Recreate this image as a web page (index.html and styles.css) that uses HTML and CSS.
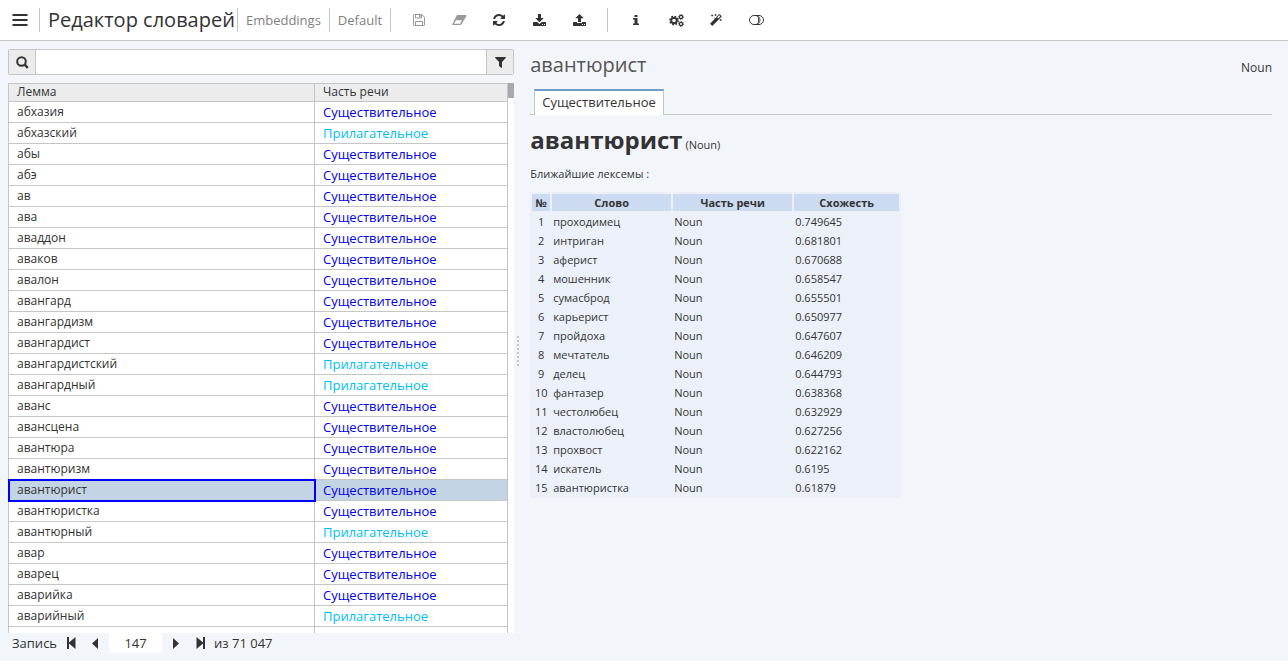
FILE: index.html
```html
<!DOCTYPE html>
<html lang="ru">
<head>
<meta charset="utf-8">
<meta name="viewport" content="width=device-width, initial-scale=1.0">
<title>Редактор словарей</title>
<link rel="stylesheet" href="styles.css">
</head>
<body>
  <header class="topbar">
    <button class="menu" aria-label="Меню">
      <svg width="16" height="14" viewBox="0 0 16 14"><path d="M.5 2h15M.5 7h15M.5 12h15" stroke="currentColor" stroke-width="2"/></svg>
    </button>
    <h1 class="title">Редактор словарей</h1>
    <a class="crumb" href="#">Embeddings</a>
    <a class="crumb" href="#">Default</a>
    <div class="tools">
      <button class="tool" aria-label="Сохранить" disabled>
        <svg width="12" height="12" viewBox="0 0 12 12" fill="none" stroke="currentColor"><path d="M.5 1.2Q.5.5 1.2.5h7.6l2.700 2.700v7.600q0 .7-.7.7H1.200Q.5 11.500.5 10.800z"/><path d="M2.500.5v3.500h6v-3.500M2.500 11.500v-4h7v4"/><path d="M6 1h1.500v2.500H6z" fill="currentColor" stroke="none"/></svg>
      </button>
      <button class="tool" aria-label="Очистить" disabled>
        <svg width="15" height="10" viewBox="0 0 15 10"><path d="M5.500 0h8q1.500 0 .8 1.300L9.500 9.300Q9 10 8.200 10H1.200Q-.2 10 .5 8.700L4.500.8Q4.800 0 5.500 0zM2 8.800h6l2-3.600H4z" fill="currentColor" fill-rule="evenodd"/></svg>
      </button>
      <button class="tool" aria-label="Обновить">
        <svg width="12" height="12" viewBox="0 0 1536 1536"><path fill="currentColor" d="M1511 928q0 5-1 7-64 268-268 434.500T764 1536q-146 0-282.500-55T238 1324l-129 129q-19 19-45 19t-45-19-19-45V960q0-26 19-45t45-19h448q26 0 45 19t19 45-19 45l-137 137q71 66 161 102t187 36q134 0 250-65t186-179q11-17 53-117 8-23 30-23h192q13 0 22.500 9.500t9.500 22.500zM1536 128v448q0 26-19 45t-45 19h-448q-26 0-45-19t-19-45 19-45l138-138Q969 256 768 256q-134 0-250 65T332 500q-11 17-53 117-8 23-30 23H50q-13 0-22.500-9.500T18 608v-7q65-268 270-434.500T768 0q146 0 284 55.500T1297 212l130-129q19-19 45-19t45 19 19 45z"/></svg>
      </button>
      <button class="tool" aria-label="Загрузить">
        <svg width="13" height="12" viewBox="0 0 13 12"><path fill="currentColor" fill-rule="evenodd" d="M5 0h3v4h2.800L6.500 8.300 2.200 4H5zM.7 8h3.500l2.300 2 2.300-2h3.500q.7 0 .7.700v2.600q0 .7-.7.700H.7q-.7 0-.7-.7V8.700Q0 8 .7 8zM9 10v1h1v-1zM11 10v1h1v-1z"/></svg>
      </button>
      <button class="tool" aria-label="Выгрузить">
        <svg width="13" height="12" viewBox="0 0 13 12"><path fill="currentColor" fill-rule="evenodd" d="M6.500 0l4.300 4.300H8V8H5V4.300H2.200zM.7 8H4v1h5V8h3.300q.7 0 .7.700v2.600q0 .7-.7.700H.7q-.7 0-.7-.7V8.700Q0 8 .7 8zM9 10v1h1v-1zM11 10v1h1v-1z"/></svg>
      </button>
    </div>
    <div class="tools">
      <button class="tool" aria-label="Информация">
        <svg width="6" height="10" viewBox="0 0 6 10"><path fill="currentColor" d="M1.500 0h3v2h-3zM0 3h4.500v5.500H6V10H0V8.500h1.500v-4H0z"/></svg>
      </button>
      <button class="tool" aria-label="Настройки">
        <svg width="15" height="13" viewBox="0 0 15 13" fill="none" stroke="currentColor"><circle cx="5" cy="6.500" r="2.800" stroke-width="2"/><circle cx="5" cy="6.500" r="4.200" stroke-width="1.400" stroke-dasharray="1.700 1.600"/><circle cx="12" cy="3" r="1.600" stroke-width="1.200"/><circle cx="12" cy="3" r="2.500" stroke-width=".9" stroke-dasharray="1 .96"/><circle cx="12" cy="10" r="1.600" stroke-width="1.200"/><circle cx="12" cy="10" r="2.500" stroke-width=".9" stroke-dasharray="1 .96"/></svg>
      </button>
      <button class="tool" aria-label="Обработка">
        <svg width="12" height="12" viewBox="0 0 12 12"><path fill="currentColor" fill-rule="evenodd" d="M9.700.3l1.800 1.800q.4.300 0 .7L2.600 11.700q-.3.300-.6 0L.3 10q-.4-.3 0-.6L9.100.3q.3-.3.600 0zM9.300 1.300L7.200 3.400l1 1 2.100-2.100z"/><path d="M2.200.5v2M1.200 1.500h2M5.500 0v2M4.500 1h2M10.700 5v2M9.700 6h2M4.200 3.500v1" stroke="currentColor" stroke-width=".8"/></svg>
      </button>
      <button class="tool" aria-label="Переключить">
        <svg width="15" height="10" viewBox="0 0 15 10" fill="none" stroke="currentColor"><rect x=".5" y=".5" width="14" height="9" rx="4.500"/><path d="M5.500.5h1a4.500 4.500 0 0 1 0 9M8 .5a4.500 4.500 0 0 1 1.500 4.500 4.500 4.500 0 0 1-1.500 4.500" stroke-width=".9"/></svg>
      </button>
    </div>
  </header>

  <main class="main">
    <section class="list">
      <form class="search">
        <button class="search-btn" type="button" aria-label="Найти">
          <svg width="13" height="13" viewBox="0 0 13 13" fill="none" stroke="currentColor" stroke-width="2"><circle cx="5.500" cy="5.500" r="4.300"/><path d="M8.600 8.600l3.200 3.200" stroke-width="2.400"/></svg>
        </button>
        <input class="search-input" type="text" aria-label="Поиск">
        <button class="search-btn" type="button" aria-label="Фильтр">
          <svg width="11" height="11" viewBox="0 0 11 11"><path fill="currentColor" d="M.5 0h10q.7.400.2 1L7 5v5.500q-.2.700-.8.300L4 9V5L.3 1Q-.2.400.5 0z"/></svg>
        </button>
      </form>

      <div class="grid">
        <table class="words">
          <thead>
            <tr><th class="col-lemma">Лемма</th><th>Часть речи</th></tr>
          </thead>
          <tbody>
            <tr><td>абхазия</td><td class="noun">Существительное</td></tr>
            <tr><td>абхазский</td><td class="adj">Прилагательное</td></tr>
            <tr><td>абы</td><td class="noun">Существительное</td></tr>
            <tr><td>абэ</td><td class="noun">Существительное</td></tr>
            <tr><td>ав</td><td class="noun">Существительное</td></tr>
            <tr><td>ава</td><td class="noun">Существительное</td></tr>
            <tr><td>аваддон</td><td class="noun">Существительное</td></tr>
            <tr><td>аваков</td><td class="noun">Существительное</td></tr>
            <tr><td>авалон</td><td class="noun">Существительное</td></tr>
            <tr><td>авангард</td><td class="noun">Существительное</td></tr>
            <tr><td>авангардизм</td><td class="noun">Существительное</td></tr>
            <tr><td>авангардист</td><td class="noun">Существительное</td></tr>
            <tr><td>авангардистский</td><td class="adj">Прилагательное</td></tr>
            <tr><td>авангардный</td><td class="adj">Прилагательное</td></tr>
            <tr><td>аванс</td><td class="noun">Существительное</td></tr>
            <tr><td>авансцена</td><td class="noun">Существительное</td></tr>
            <tr><td>авантюра</td><td class="noun">Существительное</td></tr>
            <tr><td>авантюризм</td><td class="noun">Существительное</td></tr>
            <tr class="selected"><td class="focused">авантюрист</td><td class="noun">Существительное</td></tr>
            <tr><td>авантюристка</td><td class="noun">Существительное</td></tr>
            <tr><td>авантюрный</td><td class="adj">Прилагательное</td></tr>
            <tr><td>авар</td><td class="noun">Существительное</td></tr>
            <tr><td>аварец</td><td class="noun">Существительное</td></tr>
            <tr><td>аварийка</td><td class="noun">Существительное</td></tr>
            <tr><td>аварийный</td><td class="adj">Прилагательное</td></tr>
            <tr><td></td><td></td></tr>
          </tbody>
        </table>
        <div class="scroll"><div class="thumb"></div></div>
      </div>

      <div class="pager">
        <label for="record">Запись</label>
        <button class="nav" aria-label="Первая">
          <svg width="9" height="12" viewBox="0 0 9 12"><path fill="currentColor" d="M0 0h2v5.500L8.500 0v12L2 6.500V12H0z"/></svg>
        </button>
        <button class="nav" aria-label="Предыдущая">
          <svg width="6" height="11" viewBox="0 0 6 11"><path fill="currentColor" d="M6 0v11L0 5.500z"/></svg>
        </button>
        <input class="record" id="record" type="text" value="147">
        <button class="nav" aria-label="Следующая">
          <svg width="6" height="11" viewBox="0 0 6 11"><path fill="currentColor" d="M0 0v11l6-5.500z"/></svg>
        </button>
        <button class="nav" aria-label="Последняя">
          <svg width="9" height="12" viewBox="0 0 9 12"><path fill="currentColor" d="M9 0H7v5.500L.5 0v12L7 6.500V12h2z"/></svg>
        </button>
        <span class="total">из 71 047</span>
      </div>
    </section>

    <div class="splitter"><div class="grip"></div></div>

    <section class="card">
      <div class="card-head">
        <h2 class="card-title">авантюрист</h2>
        <span class="card-pos">Noun</span>
      </div>
      <div class="tabs">
        <button class="tab">Существительное</button>
      </div>
      <div class="word"><b class="word-text">авантюрист</b> (Noun)</div>
      <p class="caption">Ближайшие лексемы :</p>
      <table class="similar">
        <thead>
          <tr><th class="col-num">№</th><th class="col-word">Слово</th><th class="col-word">Часть речи</th><th class="col-score">Схожесть</th></tr>
        </thead>
        <tbody>
          <tr><td>1</td><td>проходимец</td><td>Noun</td><td>0.749645</td></tr>
          <tr><td>2</td><td>интриган</td><td>Noun</td><td>0.681801</td></tr>
          <tr><td>3</td><td>аферист</td><td>Noun</td><td>0.670688</td></tr>
          <tr><td>4</td><td>мошенник</td><td>Noun</td><td>0.658547</td></tr>
          <tr><td>5</td><td>сумасброд</td><td>Noun</td><td>0.655501</td></tr>
          <tr><td>6</td><td>карьерист</td><td>Noun</td><td>0.650977</td></tr>
          <tr><td>7</td><td>пройдоха</td><td>Noun</td><td>0.647607</td></tr>
          <tr><td>8</td><td>мечтатель</td><td>Noun</td><td>0.646209</td></tr>
          <tr><td>9</td><td>делец</td><td>Noun</td><td>0.644793</td></tr>
          <tr><td>10</td><td>фантазер</td><td>Noun</td><td>0.638368</td></tr>
          <tr><td>11</td><td>честолюбец</td><td>Noun</td><td>0.632929</td></tr>
          <tr><td>12</td><td>властолюбец</td><td>Noun</td><td>0.627256</td></tr>
          <tr><td>13</td><td>прохвост</td><td>Noun</td><td>0.622162</td></tr>
          <tr><td>14</td><td>искатель</td><td>Noun</td><td>0.6195</td></tr>
          <tr><td>15</td><td>авантюристка</td><td>Noun</td><td>0.61879</td></tr>
        </tbody>
      </table>
    </section>
  </main>
</body>
</html>
```
FILE: styles.css
```css
* {
  box-sizing: border-box;
}
html, body {
  height: 100%;
  margin: 0;
}
body {
  display: flex;
  flex-direction: column;
  background: #f2f6fb;
  color: #333;
  font-family: "Open Sans", sans-serif;
  font-size: 13px;
}
button, input {
  font: inherit;
  color: inherit;
  border: 0;
  padding: 0;
  background: none;
}
button {
  display: flex;
  align-items: center;
  justify-content: center;
  cursor: pointer;
}

/* top bar */
.topbar {
  display: flex;
  align-items: center;
  flex: none;
  height: 41px;
  background: #fff;
  border-bottom: 1px solid #c6c6c6;
}
.menu {
  width: 39px;
  height: 24px;
}
.title {
  margin: 0;
  padding: 0 2px 0 8px;
  border-left: 1px solid #c6c6c6;
  font-size: 20px;
  font-weight: 400;
  line-height: 24px;
}
.crumb {
  padding: 0 8px;
  border-left: 1px solid #c6c6c6;
  color: #808080;
  line-height: 24px;
  text-decoration: none;
}
.tools {
  display: flex;
  padding: 0 8px;
  border-left: 1px solid #c6c6c6;
}
.tool {
  width: 40px;
  height: 24px;
}
.tool:disabled {
  color: #999;
  cursor: default;
}

/* word list */
.main {
  display: flex;
  flex: 1;
  min-height: 0;
}
.list {
  display: flex;
  flex-direction: column;
  flex: none;
  width: calc(40% - 1px);
  padding: 8px 0 0 8px;
}
.search {
  display: flex;
  flex: none;
  height: 26px;
  margin-bottom: 8px;
  background: #fff;
  border: 1px solid #c6c6c6;
  border-radius: 2px;
}
.search-btn {
  width: 26px;
  background: #ececec;
}
.search-input {
  flex: 1;
  min-width: 0;
  padding: 0 8px;
  border: solid #c6c6c6;
  border-width: 0 1px;
}
.grid {
  display: flex;
  align-items: flex-start;
  flex: 1;
  min-height: 0;
  overflow: hidden;
  background: #fff;
}
.words {
  flex: 1;
  table-layout: fixed;
  border-collapse: separate;
  border-spacing: 0;
  border: solid #c6c6c6;
  border-width: 1px 0 0 1px;
  font-size: 12px;
}
.words th, .words td {
  height: 21px;
  padding: 0 8px;
  border: solid #c6c6c6;
  border-width: 0 1px 1px 0;
  font-weight: 400;
  line-height: 18px;
  text-align: left;
  white-space: nowrap;
}
.words th {
  height: 18px;
  background: #ececec;
  line-height: 16px;
  vertical-align: top;
}
.words .col-lemma {
  width: 306px;
}
.words .noun, .words .adj {
  font-size: 13px;
}
.noun {
  color: #00e;
}
.adj {
  color: #00bff3;
}
.selected td {
  background: #c3d5e5;
}
.focused {
  outline: 2px solid #00f;
  outline-offset: -1px;
}
.scroll {
  width: 6px;
}
.thumb {
  height: 15px;
  background: #a9a9ad;
}

/* record navigation */
.pager {
  display: flex;
  align-items: flex-start;
  flex: none;
  height: 28px;
  padding-left: 4px;
  line-height: 20px;
}
.nav {
  width: 24px;
  height: 20px;
}
.pager label {
  margin-right: 2px;
}
.record {
  width: 53px;
  height: 20px;
  margin: 0 2px;
  background: #fff;
  border-radius: 2px;
  text-align: center;
}
.total {
  margin-left: 2px;
}

/* splitter */
.splitter {
  display: flex;
  align-items: center;
  justify-content: center;
  flex: none;
  width: 8px;
  cursor: col-resize;
}
.grip {
  width: 2px;
  height: 30px;
  background: repeating-linear-gradient(#c6c6c6 0 2px, transparent 2px 4px);
}

/* word card */
.card {
  flex: 1;
  min-width: 0;
  padding: 8px 16px 8px 8px;
  font-size: 11px;
}
.card-head {
  display: flex;
  align-items: center;
  justify-content: space-between;
  height: 32px;
}
.card-title {
  margin: 0;
  padding-bottom: 2px;
  color: #555;
  font-size: 20px;
  font-weight: 400;
}
.card-pos {
  padding-top: 4px;
  font-size: 12px;
}
.tabs {
  display: flex;
  height: 34px;
  padding: 8px 4px 0;
  border-bottom: 1px solid #c6c6c6;
}
.tab {
  height: 26px;
  padding: 0 7px 2px;
  background: #fff;
  border: solid #c6c6c6;
  border-width: 2px 1px 0;
  border-top-color: #6f9cc6;
  font-size: 13px;
}
.word {
  margin-top: 8px;
  line-height: 34px;
}
.word-text {
  font-size: 24px;
}
.caption {
  margin: 4px 0 10px;
  line-height: 16px;
}
.similar {
  border-spacing: 2px;
  background: #ecf1f9;
}
.similar th {
  padding: 1px;
  background: #ccdbf1;
  line-height: 15px;
}
.similar td {
  padding: 1px;
  line-height: 15px;
}
.similar td:first-child {
  text-align: center;
}
.col-num {
  width: 18px;
}
.col-word {
  width: 119px;
}
.col-score {
  width: 105px;
}
```
